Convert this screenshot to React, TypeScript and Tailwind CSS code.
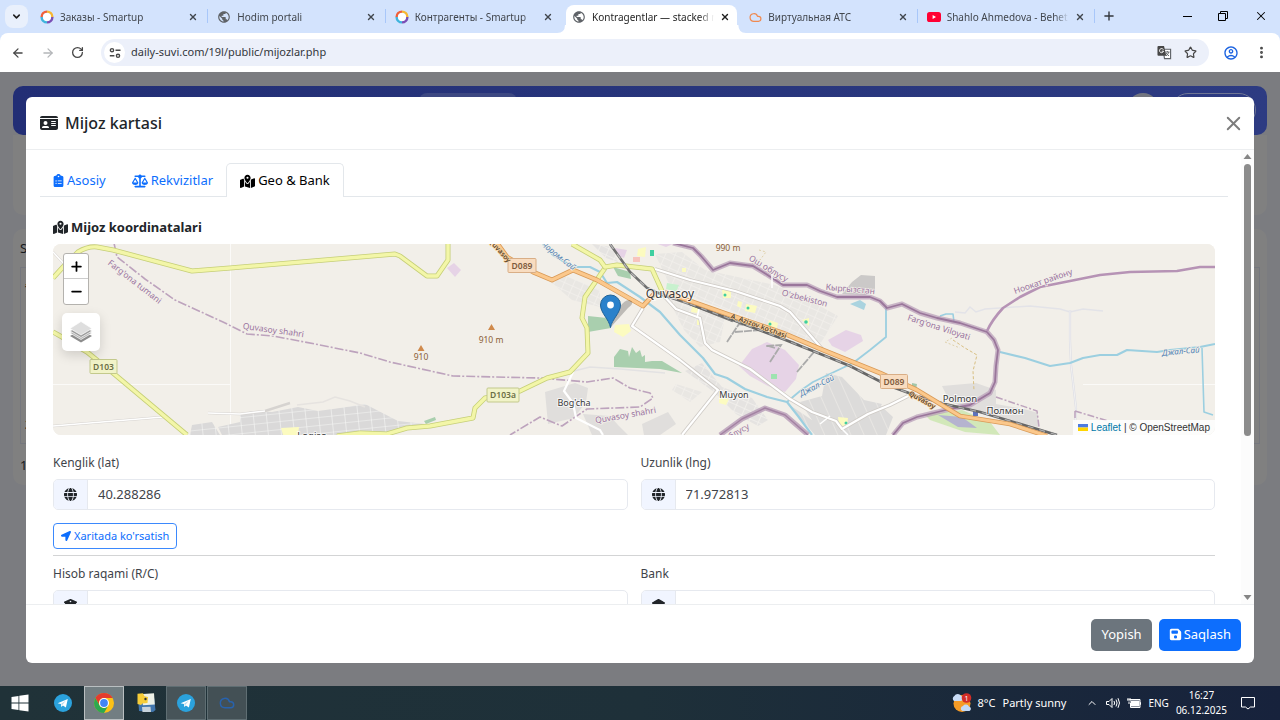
import type { ReactNode } from "react";
import {
  FaBuildingColumns,
  FaClipboardList,
  FaFloppyDisk,
  FaGlobe,
  FaIdCard,
  FaLandmark,
  FaMapLocationDot,
  FaScaleBalanced,
} from "react-icons/fa6";
import { FaLocationArrow } from "react-icons/fa";
import { MdOutlineAccountCircle, MdPublic } from "react-icons/md";
import {
  ArrowLeft,
  ArrowRight,
  ChevronDown,
  ChevronUp,
  Cloud,
  EllipsisVertical,
  Minus,
  Plus,
  RotateCw,
  Star,
  X,
} from "lucide-react";

/* ---------- Browser chrome ---------- */

function RingIcon() {
  return (
    <svg viewBox="0 0 14 14" className="size-[14px] shrink-0" fill="none" strokeWidth="2.4" aria-hidden="true">
      <path d="M7 1.6A5.4 5.4 0 0 0 1.6 7" stroke="#f0603a" />
      <path d="M7 1.6A5.4 5.4 0 0 1 12.4 7" stroke="#f7b733" />
      <path d="M12.4 7A5.4 5.4 0 0 1 7 12.4" stroke="#7a4fb5" />
      <path d="M7 12.4A5.4 5.4 0 0 1 1.6 7" stroke="#3fb4dd" />
      <circle cx="7" cy="7" r="4" fill="#fff" />
    </svg>
  );
}

function YoutubeIcon() {
  return (
    <svg viewBox="0 0 14 10" className="h-[10px] w-[14px] shrink-0" aria-hidden="true">
      <rect width="14" height="10" rx="2.6" fill="#ff0033" />
      <path d="M5.6 3v4l3.4-2z" fill="#fff" />
    </svg>
  );
}

const globe = <MdPublic className="size-[14px] shrink-0 text-[#5f6368]" aria-hidden="true" />;

const browserTabs: { title: string; icon: ReactNode; active?: boolean; line?: boolean }[] = [
  { title: "Заказы - Smartup", icon: <RingIcon />, line: true },
  { title: "Hodim portali", icon: globe, line: true },
  { title: "Контрагенты - Smartup", icon: <RingIcon /> },
  { title: "Kontragentlar — stacked m", icon: globe, active: true },
  {
    title: "Виртуальная АТС",
    icon: <Cloud className="size-[13px] shrink-0 text-[#f0894f]" strokeWidth={2.2} aria-hidden="true" />,
    line: true,
  },
  { title: "Shahlo Ahmedova - Behet", icon: <YoutubeIcon />, line: true },
];

function BrowserTab({ title, icon, active, line }: { title: string; icon: ReactNode; active?: boolean; line?: boolean }) {
  return (
    <div className={active ? "relative flex min-w-0 flex-1 px-[3px]" : "relative flex min-w-0 flex-1 px-[3px] pb-1"}>
      {active && (
        <svg viewBox="0 0 190 8" preserveAspectRatio="none" className="absolute -left-1.5 bottom-0 h-2 w-[calc(100%+12px)]" aria-hidden="true">
          <path d="M0 8q8 0 8-8h174q0 8 8 8z" fill="#fff" />
        </svg>
      )}
      <div
        className={
          active
            ? "relative flex min-w-0 flex-1 items-center gap-1.5 rounded-t-lg bg-white pr-[7px] pb-1 pl-1.5 text-[#1f1f1f]"
            : "flex min-w-0 flex-1 items-center gap-1.5 pr-[7px] pl-1.5 text-[#41464d]"
        }
      >
        {icon}
        <span className="min-w-0 flex-1 overflow-hidden text-[10px] whitespace-nowrap [mask-image:linear-gradient(90deg,#000_88%,transparent)]">
          {title}
        </span>
        <button type="button" aria-label="Close tab" className="shrink-0">
          <X className="size-[10px]" strokeWidth={3.2} />
        </button>
      </div>
      {line && <span className="absolute top-1 right-0 h-[14px] w-px bg-[#a8c7fa]" />}
    </div>
  );
}

function TabStrip() {
  return (
    <div className="flex h-[33px] items-stretch bg-[#d3e3fd] pt-[5px]">
      <button
        type="button"
        aria-label="Search tabs"
        className="mr-[3px] ml-[5px] flex size-[23px] items-center justify-center rounded-lg bg-[#e9f0fc] text-[#1f1f1f]"
      >
        <ChevronDown className="size-[11px]" strokeWidth={3.4} />
      </button>
      <div className="flex min-w-0 flex-1">
        {browserTabs.map((t) => (
          <BrowserTab key={t.title} {...t} />
        ))}
      </div>
      <div className="flex w-[185px] items-start pt-1 text-[#33373d]">
        <button type="button" aria-label="New tab" className="ml-[7px]">
          <Plus className="size-[14px]" strokeWidth={2.4} />
        </button>
        <div className="mr-3 ml-auto flex items-center gap-[25px] text-black">
          <button type="button" aria-label="Minimize" className="flex h-[13px] w-[9px] items-center">
            <span className="h-px w-[9px] bg-black" />
          </button>
          <button type="button" aria-label="Restore">
            <svg viewBox="0 0 12 12" className="size-[12px]" fill="none" stroke="currentColor" aria-hidden="true">
              <path d="M1.5 3.5h7v7h-7zM3.5 3V1.5h7v7H9" />
            </svg>
          </button>
          <button type="button" aria-label="Close window">
            <X className="size-[14px]" strokeWidth={1.8} />
          </button>
        </div>
      </div>
    </div>
  );
}

function Toolbar() {
  return (
    <div className="bg-[#d3e3fd]">
      <div className="flex h-[39px] items-center rounded-t-lg bg-white text-[#474747]">
        <div className="flex w-[101px] shrink-0 items-center gap-4 pl-[11px]">
          <button type="button" aria-label="Back">
            <ArrowLeft className="size-[14px]" strokeWidth={2.2} />
          </button>
          <button type="button" aria-label="Forward" className="text-[#b4b6b9]">
            <ArrowRight className="size-[14px]" strokeWidth={2.2} />
          </button>
          <button type="button" aria-label="Reload">
            <RotateCw className="size-[13px]" strokeWidth={2.4} />
          </button>
        </div>
        <div className="flex h-[27px] min-w-0 flex-1 items-center rounded-full bg-[#ecf0fa] pr-3 pl-[3px]">
          <button type="button" aria-label="Site information" className="flex size-[21px] items-center justify-center rounded-full bg-white">
            <svg viewBox="0 0 12 12" className="size-[12px]" fill="none" stroke="currentColor" strokeWidth="1.4" aria-hidden="true">
              <circle cx="3" cy="3.2" r="1.6" />
              <path d="M6.5 3.2h5M.8 8.8h4.6" />
              <circle cx="9" cy="8.8" r="1.6" />
            </svg>
          </button>
          <input
            type="text"
            aria-label="Address"
            defaultValue="daily-suvi.com/19l/public/mijozlar.php"
            className="ml-1.5 min-w-0 flex-1 bg-transparent text-[11px] text-[#33363b] outline-none"
          />
          <button type="button" aria-label="Translate" className="mr-3">
            <svg viewBox="0 0 16 16" className="size-[15px]" aria-hidden="true">
              <path d="M6.5 4.5h8v10H8z" fill="#fff" stroke="#5f6368" strokeWidth="1.2" />
              <path d="M8.8 7.5h4.6M11 6.4v1.1M12.6 7.6q-.8 2.6-3 4M9.800 8.600q1 2 3 3" stroke="#5f6368" strokeWidth="1" fill="none" />
              <path d="M1.500 1h6l2.400 10.500H1.500A1 1 0 0 1 .5 10.500V2a1 1 0 0 1 1-1z" fill="#474747" />
              <path d="M6.800 4.900A2.200 2.200 0 1 0 7 6.600H5" stroke="#fff" fill="none" strokeWidth="1" />
            </svg>
          </button>
          <button type="button" aria-label="Bookmark">
            <Star className="size-[13px]" strokeWidth={2.2} />
          </button>
        </div>
        <button type="button" aria-label="Profile" className="ml-[14px] text-[#1a62e0]">
          <MdOutlineAccountCircle className="size-[16px]" />
        </button>
        <button type="button" aria-label="Menu" className="mr-[11px] ml-[15px]">
          <EllipsisVertical className="size-[15px]" strokeWidth={2.6} />
        </button>
      </div>
    </div>
  );
}

/* ---------- Dimmed page behind the dialog ---------- */

function PageBehind() {
  return (
    <div aria-hidden="true" className="flex h-full flex-col bg-[#7b7c80] px-[13px] pt-[14px] text-[13px] text-[#17191c]">
      <div className="flex h-[49px] shrink-0 items-start justify-end rounded-[10px] bg-linear-to-r from-[#222e75] to-[#2d3b82] pt-[7px] pr-[11px]">
        <span className="mr-auto ml-[406px] h-8 w-[98px] rounded-lg bg-[#3d4882]" />
        <span className="mr-3 size-8 rounded-full bg-[#72757f]" />
        <span className="h-[34px] w-[85px] rounded-full border border-[#6f7694]" />
      </div>
      <div className="h-[80px] shrink-0 rounded-b-[10px] bg-[#808080]" />
      <div className="mt-[14px] flex h-[256px] shrink-0 flex-col rounded-[10px] bg-[#808080] px-[7px] pt-2.5">
        <span>S</span>
        <div className="mt-2 flex h-[177px] flex-col justify-between border border-[#75777e] py-2 pl-1">
          <b>#</b>
          <b>2</b>
        </div>
        <span className="mt-3">1</span>
      </div>
    </div>
  );
}

/* ---------- Map ---------- */

function Road({ d, fill, edge, width }: { d: string; fill: string; edge: string; width: number }) {
  return (
    <g fill="none" strokeLinejoin="round">
      <path d={d} stroke={edge} strokeWidth={width + 1.6} />
      <path d={d} stroke={fill} strokeWidth={width} />
    </g>
  );
}

function Shield({ x, y, w, label, bg, edge, color }: { x: number; y: number; w: number; label: string; bg: string; edge: string; color: string }) {
  return (
    <g>
      <rect x={x - w / 2} y={y - 7} width={w} height="14" rx="1" fill={bg} stroke={edge} />
      <text x={x} y={y + 3.2} textAnchor="middle" fontSize="8.500" fontWeight="600" fill={color}>
        {label}
      </text>
    </g>
  );
}

const yellow = { fill: "#f3f6a8", edge: "#c6cf78", width: 3.4 };
const orange = { fill: "#fbc88c", edge: "#d99a57", width: 3.2 };
const white = { fill: "#ffffff", edge: "#cfcbc6", width: 2.2 };

const border =
  "M673 243L693 248 701 256 713 270 730 263 753 266 766 274 783 285 807 285 820 291 837 297 870 297 880 301 887 308 902 304 920 313 937 318 960 323 987 332 994 340 998 350 996 366 995 382 990 393 970 405 950 409 917 417 903 423 893 435";
const borderSouth = "M720 435L742 419 765 408 785 415 808 435";
const borderEast = "M987 331Q992 320 1003 308L1020 297 1040 287 1075 280 1100 275 1130 272 1177 271 1200 267 1215 267";
const adminLine =
  "M114 243L117 257 145 279 175 300 223 322 247 334 273 336 315 344 360 353 390 362 453 376 540 378 587 382 613 378 630 388 650 393 653 398 640 407 587 409 562 426 540 417 510 435";
const railNorth = "M610 244L630 272 647 288 663 295 690 304 733 321";
const railSouth = "M690 304L733 320 783 339 823 355 850 366 887 385 917 396 945 404 980 412 1057 435";

function MapDrawing() {
  return (
    <svg
      viewBox="53 244 1162 191"
      preserveAspectRatio="xMidYMid slice"
      className="block h-full w-full"
      role="img"
      aria-label="Xarita"
      fontFamily="'Noto Sans', sans-serif"
    >
      <defs>
        <pattern id="streets" width="9" height="7" patternUnits="userSpaceOnUse" patternTransform="rotate(24)">
          <rect width="9" height="7" fill="#e5e3e1" />
          <path d="M0 0H9M0 0V7" stroke="#f3f1ed" strokeWidth="1.600" />
        </pattern>
        <pattern id="blocks" width="13" height="8" patternUnits="userSpaceOnUse" patternTransform="rotate(-6)">
          <rect width="13" height="8" fill="#dad9d9" />
          <path d="M0 0H13M0 0V8" stroke="#f7f7f6" strokeWidth="1.200" />
        </pattern>
        <pattern id="steep" width="12" height="9" patternUnits="userSpaceOnUse" patternTransform="rotate(-24)">
          <rect width="12" height="9" fill="#dcdbda" />
          <path d="M0 0V9" stroke="#ebe9e6" strokeWidth="1.600" />
        </pattern>
      </defs>
      <rect x="53" y="244" width="1162" height="191" fill="#f2efe9" />
      <path d="M230.500 244V435M53 384.500H230M1083 384.500H1215" stroke="#fbfaf8" fill="none" />

      {/* built-up areas */}
      <g fill="url(#blocks)">
        <path d="M240 415L252 411 272 412 298 407 318 411 340 408 365 404 398 421 425 424 400 429 380 435H240z" />
        <path d="M192 425L212 422 220 435H190z" />
        <path d="M218 427L240 422 244 435H222z" />
      </g>
      <g fill="url(#streets)">
        <path d="M592 244L612 247 618 262 606 258z" />
        <path d="M552 283L566 276 600 290 600 307 572 300z" opacity=".7" />
        <path d="M655 254L682 252 705 270 733 276 775 285 800 295 838 316 820 344 800 337 760 322 700 300 670 286z" opacity=".7" />
        <path d="M668 298L688 301 706 306 725 318 720 342 700 347 684 330z" opacity=".7" />
        <path d="M685 371L702 363 722 387 752 398 768 420 758 426 736 414 714 392z" />
        <path d="M676 384L702 392 690 402 672 390z" opacity=".7" />
      </g>
      <g fill="#e0dedc">
        <path d="M545 392L575 383 588 388 586 402 574 418 548 424z" />
        <path d="M583 414L610 416 618 425 628 435H592z" />
        <path d="M642 424L668 412 676 424 660 435H644z" />
        <path d="M942 386L976 383 996 390 996 404 1024 409 1038 413 1038 427 985 414 950 402z" />
      </g>
      <g fill="url(#steep)">
        <path d="M800 402L822 396 826 373 842 377 864 400 882 404 870 423 843 427 812 420z" />
        <path d="M788 404L812 420 880 405 893 417 886 435H815z" />
      </g>
      <path d="M842 294L852 282 861 275 875 276 875 289 866 295z" fill="#cbc9c8" />
      <path d="M925 415L962 410 990 422 1000 435 965 432 930 420z" fill="#c9e6ac" opacity=".8" />
      <path d="M938 415L962 417 977 428 958 427z" fill="#b5b3cf" />

      {/* industry, parks and amenities */}
      <g fill="#e6d3e6">
        <path d="M739 366L752 349 767 342 785 350 799 365 796 379 785 392 768 386 750 376z" />
        <path d="M828 340L846 330 861 335 863 341 845 352 832 346z" />
        <path d="M447 268L454 263 461 270 455 277z" />
        <path d="M615 248L627 250 624 258 616 255z" />
        <path d="M655 243H675L666 247z" />
      </g>
      <g fill="#a9cfae">
        <path d="M588 316L607 318 611 328 588 332z" />
        <path d="M614 364L614 357 620 349 628 351 629 357 632 347 636 353 640 350 642 357 645 355 645 362 652 361 662 361 682 373 660 369 614 367z" />
        <path d="M613 267L630 272 631 279 618 276z" />
        <path d="M424 421L435 417 436 420 426 424z" />
      </g>
      <g fill="#c8f1ce">
        <path d="M667 283L679 285 676 292 666 289z" />
        <path d="M771 374H777V379H771z" fill="#9ee3b0" />
      </g>
      <g fill="#fcfbc0">
        <path d="M615 325L629 324 631 331 623 337 614 332zM722 290H731V298H723zM746 304L757 306 755 313 745 311zM769 320L778 323 777 328 767 326zM638 249L646 247 645 257 637 256zM838 417L848 418 847 427 839 425zM692 306L699 308 697 313 691 312zM281 428L299 427 298 435H283zM719 397L729 399 726 405 719 403zM682 268H686V272H682zM738 301L742 302 741 308 737 306zM697 320H700V325H697zM802 320L809 318 809 326z" />
      </g>
      <g fill="#3fcfa0">
        <rect x="650" y="250" width="4" height="6" />
        <circle cx="725" cy="295" r="1.500" />
        <circle cx="748" cy="308" r="1.500" />
        <circle cx="770" cy="324" r="1.500" />
        <circle cx="806" cy="322" r="1.800" />
        <circle cx="846" cy="423" r="1.500" />
      </g>
      <rect x="633" y="257" width="7" height="5" fill="#f7c4bd" />
      <path d="M912 383L917 384 916 390 912 388z" fill="#a3c7aa" />
      <rect x="973" y="411" width="5" height="5" fill="#5d72bd" />

      {/* minor ways */}
      <g fill="none" stroke="#fff" strokeWidth="1.500">
        <path d="M53 252L66 266M53 426L163 417M208 413L240 414 265 411 290 403" stroke="#d6d3d0" strokeWidth="2.400" />
        <path d="M53 252L66 266M53 426L163 417M208 413L240 414 265 411" />
        <path d="M297 405L323 402 335 397 350 401 365 407" stroke="#e6e3e0" />
        <path d="M570 372L590 367 620 369 665 373" stroke="#e3e2e3" />
        <path d="M955 312L965 313 970 307 976 312 985 309 1000 308 1030 306 1060 309 1070 312 1083 309 1103 311" stroke="#e3e3e8" />
        <path d="M1070 310L1070 340 1071 365 1076 408 1075 425" stroke="#dcdde5" strokeWidth="2.200" />
        <path d="M1070 310L1070 340 1071 365 1076 408 1075 425" stroke="#f7f6f4" strokeWidth=".8" />
      </g>
      <path d="M953 340L965 348 977 355 973 371 974 391" fill="none" stroke="#d8bf82" strokeDasharray="3 2" />
      <path d="M759 250L766 252 760 260 751 264M952 338L945 342 960 348" fill="none" stroke="#dfd1ab" strokeDasharray="2 2" />

      {/* water */}
      <g fill="none" stroke="#9ccfe0" strokeWidth="2.200" strokeLinejoin="round">
        <path d="M543 244L553 255 573 267 590 267 600 272 607 283 617 282 640 297 660 312 680 335 703 358 715 374 727 378 745 389 767 397 787 402 798 416 812 435" />
        <path d="M787 402L800 391 813 382 853 363 870 350 886 337V307" strokeWidth="1.800" />
        <path d="M1000 352L1025 358 1050 366 1070 363 1083 358 1100 355 1117 355 1127 350 1157 352 1170 350 1200 347 1215 344" />
        <path d="M1202 348L1204 412 1213 415M940 316L946 314 953 314 954 322" strokeWidth="1.600" />
      </g>
      <path d="M850 304L860 300 866 304 864 310z" fill="#aad3df" />

      {/* boundaries */}
      <g fill="none" strokeLinejoin="round">
        <path d={border} stroke="#b79bb7" strokeWidth="5" opacity=".7" />
        <path d={border} stroke="#8f6790" strokeWidth="1.800" opacity=".8" />
        <path d={borderSouth} stroke="#b79bb7" strokeWidth="5" opacity=".8" />
        <path d={borderSouth} stroke="#8f6790" strokeWidth="1.500" opacity=".6" />
        <path d={borderEast} stroke="#b693b5" strokeWidth="2.600" />
        <path d={adminLine} stroke="#bda3bd" strokeWidth="1.600" strokeDasharray="9 2 2 2" />
        <path d="M996 397L1037 411 1039 427M1075 411L1108 421M1075 411V420" stroke="#bda3bd" strokeWidth="1.500" strokeDasharray="7 2 2 2" />
      </g>

      {/* roads */}
      <Road d="M655 269L690 280 735 291 780 306 790 312 823 350" {...white} />
      <Road d="M663 295L676 309 700 318 705 343 712 350 750 369 790 399 812 412 836 421 842 429 868 414 890 405 908 396" {...white} />
      <Road d="M643 308L632 326 680 360 718 390 682 435" {...white} />
      <path d="M697 318L700 304M772 288V270M830 416L820 424M842 429L848 435" stroke="#fff" fill="none" strokeWidth="1.500" />
      <path d="M573 372L564 391 573 403 576 418 600 430 603 435" fill="none" stroke="#fff" strokeWidth="2.200" />
      <Road d="M53 278L63 267 78 252Q88 246 97 247L113 250 192 271 230 268 360 257 395 254 400 256 427 276H437L448 260V243" {...yellow} />
      <Road d="M53 332L62 337 87 352 113 373 187 435" {...yellow} />
      <Road d="M337 436L360 433 387 434 407 428 430 426 473 418 475 408 485 398 520 391 547 378 570 372 588 353 587 328 582 318 585 297 605 268" {...yellow} />
      <Road d="M572 244L600 260 605 267 617 265 652 269 662 291" {...yellow} />
      <path d="M727 342L739 324 756 327M770 362L781 345 766 346M768 346L775 348M797 372L814 352M735 332L760 330 800 345" fill="none" stroke="#aaa" strokeWidth="1.800" strokeDasharray="8 1" />
      <path d={railNorth} fill="none" stroke="#707070" strokeWidth="2.600" />
      <path d={railNorth} fill="none" stroke="#d8d8d8" strokeWidth="1.200" strokeDasharray="6 6" opacity=".7" />
      <path d={railSouth} fill="none" stroke="#666" strokeWidth="2.800" />
      <path d={railSouth} fill="none" stroke="#ddd" strokeWidth="1.200" strokeDasharray="6 6" opacity=".6" />
      <Road d="M497 243L507 257 533 272 552 280 573 270 597 280 643 306 655 293M665 292L693 302 727 314 783 333 823 350 880 373 917 390 960 416 1010 424 1047 436" {...orange} />

      {/* labels */}
      <Shield x={103.500} y={366.500} w={27} label="D103" bg="#f1f3c8" edge="#c3c98c" color="#6b6f45" />
      <Shield x={503} y={395} w={32} label="D103a" bg="#f1f3c8" edge="#c3c98c" color="#6b6f45" />
      <Shield x={522} y={265.500} w={28} label="D089" bg="#f8dcc0" edge="#d9ae86" color="#7c5a3c" />
      <Shield x={894} y={381.500} w={27} label="D089" bg="#f8dcc0" edge="#d9ae86" color="#7c5a3c" />
      <g fill="#d08a4c">
        <path d="M491.500 324L495 330H488zM421 345L424.500 351H417.500z" />
      </g>
      <g textAnchor="middle" fontSize="8.500">
        <g fill="#8a5d38">
          <text x="491" y="343">910 m</text>
          <text x="421" y="360">910</text>
          <text x="728" y="251">990 m</text>
        </g>
        <g fill="#9a73a0" stroke="#f2efe9" strokeWidth="1.500" paintOrder="stroke" fontSize="8.500">
          <text transform="translate(133 284) rotate(38)">Farg'ona tumani</text>
          <text transform="translate(273 333) rotate(8)">Quvasoy shahri</text>
          <text transform="translate(626 418) rotate(-10)">Quvasoy shahri</text>
          <text transform="translate(767 271) rotate(31)">Ош облусу</text>
          <text transform="translate(850 292) rotate(5)">Кыргызстан</text>
          <text transform="translate(804 301) rotate(14)">O'zbekiston</text>
          <text transform="translate(938 330) rotate(18)">Farg'ona Viloyati</text>
          <text transform="translate(1044 284) rotate(-19)">Ноокат району</text>
          <text transform="translate(738 435) rotate(-30)">облусу</text>
        </g>
        <g fill="#4d80b3" fontStyle="italic" stroke="#f2efe9" strokeWidth="1.500" paintOrder="stroke" fontSize="8">
          <text transform="translate(818 388) rotate(-27)">Джал-Сай</text>
          <text transform="translate(1181 354) rotate(-5)">Джал-Сай</text>
          <text transform="translate(557 258) rotate(38)">Чором-Сай</text>
        </g>
        <g fill="#5a452c" fontWeight="600" stroke="#fcd6a4" strokeWidth="1.200" paintOrder="stroke" fontSize="7">
          <text transform="translate(758 328) rotate(20)">A. Azizov ko'chasi</text>
          <text transform="translate(921 402) rotate(29)">Quvasoy</text>
          <text transform="translate(498 252) rotate(48)">Quvasoy</text>
        </g>
        <g fill="#3a3a3a" stroke="#fff" strokeWidth="2" strokeOpacity=".7" paintOrder="stroke" fontSize="9.500">
          <text x="670" y="298" fontSize="12">Quvasoy</text>
          <text x="574" y="406" fontSize="9">Bog'cha</text>
          <text x="734" y="398" fontSize="9">Muyon</text>
          <text x="960" y="402">Polmon</text>
          <text x="1005" y="414">Полмон</text>
          <text x="312" y="439">Logiso</text>
        </g>
      </g>

      {/* marker */}
      <path d="M611 327L628 308Q636 302 629 300 620 300 611 327z" fill="#000" opacity=".22" />
      <path d="M610.500 327.500C609 319 600.500 313 600.500 305A10 10 0 0 1 620.500 305C620.500 313 612 319 610.500 327.500z" fill="#2a81cb" stroke="#1f6297" strokeWidth="1" />
      <circle cx="610.500" cy="305" r="3.400" fill="#fff" />
    </svg>
  );
}

function MapView() {
  return (
    <div className="relative h-[191px] overflow-hidden rounded-lg bg-[#f2efe9]">
      <MapDrawing />
      <div className="absolute top-[9px] left-[9px] flex flex-col items-start gap-2">
        <div className="ml-px flex w-[26px] flex-col rounded-[3px] border border-[#b4b2ae] bg-white text-black">
          <button type="button" aria-label="Zoom in" className="flex h-[25px] items-center justify-center border-b border-[#ccc]">
            <Plus className="size-[15px]" strokeWidth={2.8} />
          </button>
          <button type="button" aria-label="Zoom out" className="flex h-[25px] items-center justify-center">
            <Minus className="size-[15px]" strokeWidth={2.8} />
          </button>
        </div>
        <button
          type="button"
          aria-label="Layers"
          className="flex size-[38px] items-center justify-center rounded-[5px] bg-white shadow-[0_4px_12px_rgba(0,0,0,0.15)]"
        >
          <svg viewBox="0 0 24 24" className="size-[24px]" aria-hidden="true">
            <path d="M12 9.500L23 16 12 22.500 1 16z" fill="#8d8d8d" />
            <path d="M12 6.500L23 13 12 19.500 1 13z" fill="#b3b3b3" stroke="#fff" strokeWidth=".7" />
            <path d="M12 4.500L23 11 12 17.500 1 11z" fill="#9d9d9d" stroke="#fff" strokeWidth=".7" />
            <path d="M12 1.500L23 8.500 12 15 1 8.500z" fill="#dedede" stroke="#fff" strokeWidth=".7" />
          </svg>
        </button>
      </div>
      <div className="absolute right-0 bottom-0 flex h-[15px] items-center bg-white/80 px-[5px] font-['Liberation_Sans',sans-serif] text-[10px] text-[#333]">
        <svg viewBox="0 0 10 7" className="mr-[3px] h-[7px] w-[10px]" aria-hidden="true">
          <path d="M0 0h10v3.500H0z" fill="#4c7be1" />
          <path d="M0 3.500h10V7H0z" fill="#ffd500" />
        </svg>
        <a href="#leaflet" className="text-[#0078a8]">
          Leaflet
        </a>
        <span className="ml-[3px]">| © OpenStreetMap</span>
      </div>
    </div>
  );
}

/* ---------- Dialog ---------- */

function Field({ id, label, icon, value }: { id: string; label: string; icon: ReactNode; value: string }) {
  return (
    <div className="min-w-0">
      <label htmlFor={id} className="mb-1.5 block text-[12px] leading-5 text-[#3f444a]">
        {label}
      </label>
      <div className="flex h-[31px] overflow-hidden rounded-[5px] border border-[#e6e9ef] bg-white">
        <span className="flex w-[34px] shrink-0 items-center justify-center border-r border-[#e6e9ef] bg-[#f1f5ff] text-[13px] text-[#212529]">
          {icon}
        </span>
        <input id={id} type="text" defaultValue={value} className="min-w-0 flex-1 px-2.5 text-[13px] text-[#3f444a] outline-none" />
      </div>
    </div>
  );
}

function CustomerDialog() {
  return (
    <section
      role="dialog"
      aria-labelledby="dialog-title"
      className="absolute inset-x-[26px] top-[25px] bottom-[23px] flex flex-col overflow-hidden rounded-md bg-white text-[#212529]"
    >
      <header className="flex h-[53px] shrink-0 items-center border-b border-[#eceef0] px-[14px]">
        <FaIdCard className="mr-[7px] size-[18px]" aria-hidden="true" />
        <h1 id="dialog-title" className="text-[16px] font-medium">
          Mijoz kartasi
        </h1>
        <button type="button" aria-label="Close" className="-mr-[5px] ml-auto text-[#7c7c7c]">
          <X className="size-[23px]" strokeWidth={2} />
        </button>
      </header>

      <div className="flex min-h-0 flex-1">
        <div className="min-w-0 flex-1 overflow-hidden px-[13px] pt-[13px]">
          <nav role="tablist" className="ml-px flex h-[34px] border-b border-[#e3e7eb] text-[13px] text-[#0d6efd]">
            <button type="button" role="tab" className="flex items-center gap-[3px] px-[13px] pt-0.5">
              <FaClipboardList className="w-[11px]" aria-hidden="true" />
              Asosiy
            </button>
            <button type="button" role="tab" className="flex items-center gap-[3px] px-[13px] pt-0.5">
              <FaScaleBalanced className="size-[16px]" aria-hidden="true" />
              Rekvizitlar
            </button>
            <button
              type="button"
              role="tab"
              aria-selected="true"
              className="-mb-px flex items-center gap-[3px] rounded-t-[5px] border border-b-0 border-[#e3e7eb] bg-white px-[13px] pt-px text-black"
            >
              <FaMapLocationDot className="size-[15px]" aria-hidden="true" />
              Geo &amp; Bank
            </button>
          </nav>

          <div className="pr-[13px] pl-[14px] pt-5">
            <h2 className="mb-[7px] flex items-center gap-[3px] text-[13px] leading-5 font-bold">
              <FaMapLocationDot className="size-[15px]" aria-hidden="true" />
              Mijoz koordinatalari
            </h2>
            <MapView />
            <div className="mt-[18px] grid grid-cols-2 gap-[13px]">
              <Field id="lat" label="Kenglik (lat)" icon={<FaGlobe />} value="40.288286" />
              <Field id="lng" label="Uzunlik (lng)" icon={<FaGlobe />} value="71.972813" />
            </div>
            <button
              type="button"
              className="mt-[13px] flex h-[26px] items-center gap-[3px] rounded-[4px] border border-[#3b89fd] px-[7px] text-[11px] text-[#0d6efd]"
            >
              <FaLocationArrow className="size-[10px]" aria-hidden="true" />
              Xaritada ko'rsatish
            </button>
            <hr className="mt-1.5 mb-2 border-[#d3d4d5]" />
            <div className="grid grid-cols-2 gap-[13px]">
              <Field id="account" label="Hisob raqami (R/C)" icon={<FaBuildingColumns />} value="" />
              <Field id="bank" label="Bank" icon={<FaLandmark />} value="" />
            </div>
          </div>
        </div>
        <div aria-hidden="true" className="flex w-[13px] shrink-0 flex-col items-center bg-[#fcfcfc] py-1">
          <svg viewBox="0 0 8 5" className="h-[5px] w-[9px] shrink-0">
            <path d="M0 5L4 0l4 5z" fill="#858585" />
          </svg>
          <div className="mt-[5px] h-[61%] w-[7px] rounded-full bg-[#8b8b8b]" />
          <svg viewBox="0 0 8 5" className="mt-auto h-[5px] w-[9px] shrink-0">
            <path d="M0 0l4 5 4-5z" fill="#858585" />
          </svg>
        </div>
      </div>

      <footer className="flex h-[59px] shrink-0 items-center justify-end gap-[7px] border-t border-[#eceef0] px-[13px] pt-px text-[13px] text-white">
        <button type="button" className="h-8 rounded-[5px] bg-[#6c757d] px-2.5">
          Yopish
        </button>
        <button type="button" className="flex h-8 items-center gap-[2px] rounded-[5px] bg-[#0d6efd] px-2.5">
          <FaFloppyDisk className="size-[13px]" aria-hidden="true" />
          Saqlash
        </button>
      </footer>
    </section>
  );
}

/* ---------- Taskbar ---------- */

function TelegramIcon() {
  return (
    <svg viewBox="0 0 18 18" className="size-[18px]" aria-hidden="true">
      <circle cx="9" cy="9" r="9" fill="#2ba2dd" />
      <path d="M3.600 9.200L13.800 5l-1.900 8.600-3-2.100-1.600 1.600-.4-3z" fill="#fff" />
      <path d="M6.900 10.100L12 6.500 8.200 10.900z" fill="#b5d7ec" />
    </svg>
  );
}

function ChromeIcon() {
  return (
    <svg viewBox="0 0 20 20" className="size-[20px]" aria-hidden="true">
      <circle cx="10" cy="10" r="10" fill="#fbc116" />
      <path d="M1.340 5A10 10 0 0 1 18.660 5H10A5 5 0 0 0 5.670 12.500z" fill="#e33b2e" />
      <path d="M1.340 5A10 10 0 0 0 10 20L14.330 12.500A5 5 0 0 1 5.670 12.500z" fill="#2da94f" />
      <circle cx="10" cy="10" r="5" fill="#fff" />
      <circle cx="10" cy="10" r="3.900" fill="#4285f4" />
    </svg>
  );
}

function Taskbar() {
  const slot = "flex h-full w-[41px] items-center justify-center";
  return (
    <footer className="flex h-[34px] shrink-0 items-center bg-linear-to-r from-[#203238] via-[#1e3039] to-[#17223c] text-[11px] text-white">
      <button type="button" aria-label="Start" className="flex h-full w-[42px] items-center justify-center pr-[3px]">
        <svg viewBox="0 0 18 18" className="size-[18px]" fill="#fff" aria-hidden="true">
          <path d="M.5 3l7-1.100v6.700h-7zM8.300 1.800L17.500.4v8.200H8.300zM.5 9.400h7v6.700l-7-1.100zM8.300 9.400h9.200v8.200l-9.200-1.400z" />
        </svg>
      </button>
      <button type="button" aria-label="Telegram" className={slot}>
        <TelegramIcon />
      </button>
      <button type="button" aria-label="Chrome" className="mx-px flex h-full w-[40px] items-center justify-center border border-[#b9bfc1] bg-[#727e82]">
        <ChromeIcon />
      </button>
      <button type="button" aria-label="Save files" className={slot}>
        <svg viewBox="0 0 20 20" className="size-[20px]" aria-hidden="true">
          <path d="M2 4l16 .5L19.500 17 17 19 3 18z" fill="#4176ad" />
          <path d="M7 1l11-.8.8 11.300-12 .8z" fill="#edf1e7" />
          <path d="M6 14l8.500-.3.500 5.300H6.500z" fill="#c8d3dc" />
          <path d="M1.500.8L7 .2l1.500 3L12 4l-.5 6-5 .5L5 12 1.500 11z" fill="#f7cd38" />
          <circle cx="9.500" cy="6" r="1.200" fill="#333" />
        </svg>
      </button>
      <button type="button" aria-label="Telegram window" className="mr-px flex h-full w-[40px] items-center justify-center border border-[#5f6e73] bg-[#475459]">
        <TelegramIcon />
      </button>
      <button type="button" aria-label="Cloud phone" className="flex h-full w-[40px] items-center justify-center border border-[#5f6e73] bg-[#435055] text-[#2862ad]">
        <Cloud className="size-[16px]" strokeWidth={2.200} />
      </button>

      <div className="ml-auto flex h-full items-center pr-[25px]">
        <svg viewBox="0 0 21 20" className="mr-1.5 h-[20px] w-[21px]" aria-hidden="true">
          <circle cx="11" cy="10.500" r="8.500" fill="#f59b26" />
          <path d="M3 8a3 3 0 0 1 .3-5A4 4 0 0 1 10.500 3.300 2.400 2.400 0 0 1 10 8z" fill="#c9dcf6" />
          <path d="M11.500 18a2.600 2.600 0 0 1 .5-5 3.500 3.500 0 0 1 6 .6 2.300 2.300 0 0 1 .5 4.400z" fill="#c3daf7" />
          <circle cx="15.500" cy="5" r="4.800" fill="#d32d27" />
          <text x="15.500" y="7.600" textAnchor="middle" fontSize="7" fill="#fff">
            1
          </text>
        </svg>
        <span className="mr-[7px]">8°C</span>
        <span className="mr-5">Partly sunny</span>
        <ChevronUp className="mr-2 size-[12px]" strokeWidth={2} aria-hidden="true" />
        <svg viewBox="0 0 14 12" className="mr-[7px] h-[12px] w-[14px]" fill="none" stroke="#fff" aria-hidden="true">
          <path d="M.5 4.500H3L6 1.500v9L3 7.500H.5zM8 4q1.200 2 0 4M10 2.500q2.200 3.500 0 7M12 1.200q3 4.800 0 9.600" />
        </svg>
        <svg viewBox="0 0 14 10" className="mr-[7px] h-[10px] w-[14px]" aria-hidden="true">
          <path d="M3.500 2.500h9v6h-9zM13 4.300h1v2.400h-1z" fill="#fff" />
          <path d="M2.500 1.500h10.500v8H3.500V5M0 2h4M1 0v2M3 0v2M2 3.500V6" stroke="#fff" fill="none" />
        </svg>
        <span className="mr-[7px] text-[10px]">ENG</span>
        <div className="mr-[14px] flex flex-col items-center text-[10px] leading-[15px]">
          <span>16:27</span>
          <span>06.12.2025</span>
        </div>
        <svg viewBox="0 0 14 14" className="size-[14px]" fill="none" stroke="#fff" aria-hidden="true">
          <path d="M.5 1.500h13v9.500H9.500L7 13 4.500 11h-4z" />
        </svg>
      </div>
    </footer>
  );
}

export default function App() {
  return (
    <div className="flex h-screen flex-col overflow-hidden font-['Noto_Sans','Open_Sans',sans-serif]">
      <TabStrip />
      <Toolbar />
      <main className="relative min-h-0 flex-1 overflow-hidden">
        <PageBehind />
        <CustomerDialog />
      </main>
      <Taskbar />
    </div>
  );
}
